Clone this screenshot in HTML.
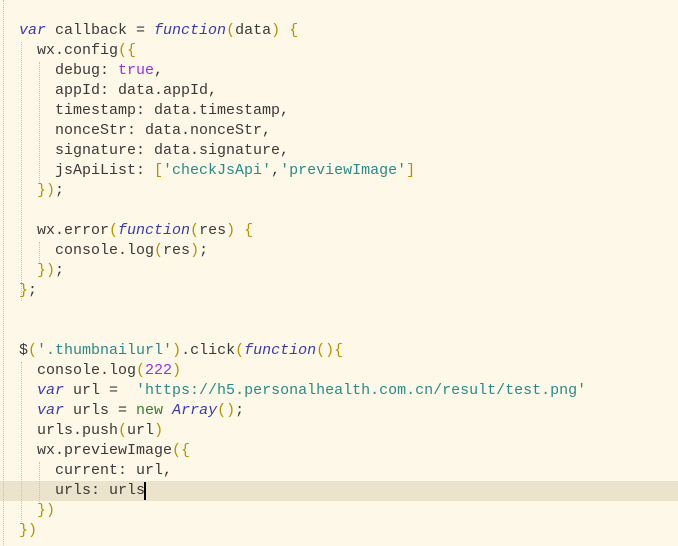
<!DOCTYPE html>
<html><head><style>
html,body{margin:0;padding:0;}
body{width:678px;height:546px;background:#fdf8e8;position:relative;overflow:hidden;font-family:"Liberation Mono",monospace;font-size:15px;color:#3a3a3a;}
.l{position:absolute;left:19px;height:20px;line-height:20px;white-space:pre;}
.k{color:#3c3ca8;font-style:italic}
.f{color:#3c3ca8;font-style:italic}
.b{color:#b89000}
.t{color:#9a30e0}
.s{color:#2a8a8a}
.n{color:#3a7a3a}
.hl{position:absolute;left:0;top:481px;width:678px;height:20px;background:#ebe3cb;}
.g{position:absolute;width:0;border-left:1px dotted #c8c0b0;}
.cur{position:absolute;left:144px;top:482px;width:2px;height:18px;background:#000;}
</style></head><body>
<div class="hl"></div>
<div class="g" style="left:3px;top:0;height:546px"></div>
<div class="g" style="left:21px;top:42px;height:259px"></div>
<div class="g" style="left:39px;top:62px;height:120px"></div>
<div class="g" style="left:39px;top:242px;height:20px"></div>
<div class="g" style="left:21px;top:362px;height:160px"></div>
<div class="g" style="left:39px;top:462px;height:40px"></div>
<div class="l" style="top:21px"><span class="k">var</span> callback = <span class="f">function</span><span class="b">(</span>data<span class="b">)</span> <span class="b">{</span></div>
<div class="l" style="top:41px">  wx.config<span class="b">({</span></div>
<div class="l" style="top:61px">    debug: <span class="t">true</span>,</div>
<div class="l" style="top:81px">    appId: data.appId,</div>
<div class="l" style="top:101px">    timestamp: data.timestamp,</div>
<div class="l" style="top:121px">    nonceStr: data.nonceStr,</div>
<div class="l" style="top:141px">    signature: data.signature,</div>
<div class="l" style="top:161px">    jsApiList: <span class="b">[</span><span class="s">'checkJsApi'</span>,<span class="s">'previewImage'</span><span class="b">]</span></div>
<div class="l" style="top:181px">  <span class="b">})</span>;</div>
<div class="l" style="top:221px">  wx.error<span class="b">(</span><span class="f">function</span><span class="b">(</span>res<span class="b">)</span> <span class="b">{</span></div>
<div class="l" style="top:241px">    console.log<span class="b">(</span>res<span class="b">)</span>;</div>
<div class="l" style="top:261px">  <span class="b">})</span>;</div>
<div class="l" style="top:281px"><span class="b">}</span>;</div>
<div class="l" style="top:341px">$<span class="b">(</span><span class="s">'.thumbnailurl'</span><span class="b">)</span>.click<span class="b">(</span><span class="f">function</span><span class="b">(){</span></div>
<div class="l" style="top:361px">  console.log<span class="b">(</span><span class="t">222</span><span class="b">)</span></div>
<div class="l" style="top:381px">  <span class="k">var</span> url =  <span class="s">'https://h5.personalhealth.com.cn/result/test.png'</span></div>
<div class="l" style="top:401px">  <span class="k">var</span> urls = <span class="n">new</span> <span class="f">Array</span><span class="b">()</span>;</div>
<div class="l" style="top:421px">  urls.push<span class="b">(</span>url<span class="b">)</span></div>
<div class="l" style="top:441px">  wx.previewImage<span class="b">({</span></div>
<div class="l" style="top:461px">    current: url,</div>
<div class="l" style="top:481px">    urls: urls</div>
<div class="cur"></div>
<div class="l" style="top:501px">  <span class="b">})</span></div>
<div class="l" style="top:521px"><span class="b">})</span></div>
</body></html>
